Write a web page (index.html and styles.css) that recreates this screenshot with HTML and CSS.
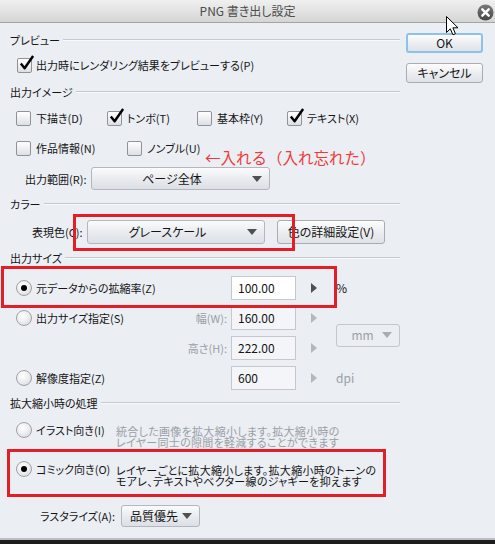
FILE: index.html
```html
<!DOCTYPE html>
<html lang="ja">
<head>
<meta charset="utf-8">
<link rel="stylesheet" href="styles.css">
</head>
<body>
<div class="dialog">
  <div class="titlebar">
    <span class="title">PNG 書き出し設定</span>
    <svg class="close" width="17" height="17" viewBox="0 0 17 17">
      <defs><linearGradient id="cg" x1="0" y1="0" x2="0" y2="1"><stop offset="0" stop-color="#7a7a7a"/><stop offset="1" stop-color="#474747"/></linearGradient></defs>
      <circle cx="8.5" cy="8.5" r="8" fill="url(#cg)"/>
      <path d="M5.3 5.3 L11.7 11.7 M11.7 5.3 L5.3 11.7" stroke="#fff" stroke-width="2.4" stroke-linecap="round"/>
    </svg>
  </div>
  <div class="body">
    <div class="main">
      <div class="sec s1">プレビュー</div>
      <div class="row r-preview">
        <span class="cb on"><svg viewBox="0 0 18 18"><path d="M3 9 L7 14 L16 1" fill="none" stroke="#000" stroke-width="2.6" stroke-linejoin="round"/></svg></span>
        <span>出力時にレンダリング結果をプレビューする(P)</span>
      </div>

      <div class="sec s2">出力イメージ</div>
      <div class="row r-img1">
        <span class="item"><span class="cb"></span>下描き(D)</span>
        <span class="item"><span class="cb on"><svg viewBox="0 0 18 18"><path d="M3 9 L7 14 L16 1" fill="none" stroke="#000" stroke-width="2.6" stroke-linejoin="round"/></svg></span>トンボ(T)</span>
        <span class="item"><span class="cb"></span>基本枠(Y)</span>
        <span class="item"><span class="cb on"><svg viewBox="0 0 18 18"><path d="M3 9 L7 14 L16 1" fill="none" stroke="#000" stroke-width="2.6" stroke-linejoin="round"/></svg></span>テキスト(X)</span>
      </div>
      <div class="row r-img2">
        <span class="item"><span class="cb"></span>作品情報(N)</span>
        <span class="item"><span class="cb"></span>ノンブル(U)</span>
      </div>
      <div class="row r-range">
        <span class="lbl lbl-range">出力範囲(R):</span>
        <span class="dd dd-range"><span class="dd-text">ページ全体</span><span class="arrow"></span></span>
      </div>

      <div class="sec s3">カラー</div>
      <div class="row r-color">
        <span class="lbl lbl-color">表現色(C):</span>
        <span class="dd dd-color"><span class="dd-text">グレースケール</span><span class="arrow"></span></span>
        <span class="btn btn-detail">色の詳細設定(V)</span>
      </div>

      <div class="sec s4">出力サイズ</div>
      <div class="size-grid">
        <span class="opt"><span class="rb on"></span>元データからの拡縮率(Z)</span>
        <span class="field">100.00</span>
        <span class="spin"></span>
        <span class="unit">%</span>

        <span class="opt"><span class="rb"></span>出力サイズ指定(S)<span class="sub">幅(W):</span></span>
        <span class="field off">160.00</span>
        <span class="spin off"></span>
        <span class="dd dd-mm"><span class="dd-text">mm</span><span class="arrow off"></span></span>

        <span class="opt"><span class="sub">高さ(H):</span></span>
        <span class="field off">222.00</span>
        <span class="spin off"></span>

        <span class="opt"><span class="rb"></span>解像度指定(Z)</span>
        <span class="field off">600</span>
        <span class="spin off"></span>
        <span class="unit gray">dpi</span>
      </div>

      <div class="sec s5">拡大縮小時の処理</div>
      <div class="scale r-illust">
        <span class="opt"><span class="rb"></span>イラスト向き(I)</span>
        <span class="desc gray">統合した画像を拡大縮小します。拡大縮小時の<br>レイヤー同士の隙間を軽減することができます</span>
      </div>
      <div class="scale r-comic">
        <span class="opt"><span class="rb on"></span>コミック向き(O)</span>
        <span class="desc">レイヤーごとに拡大縮小します。拡大縮小時のトーンの<br>モアレ、テキストやベクター線のジャギーを抑えます</span>
      </div>
      <div class="row r-raster">
        <span class="lbl lbl-raster">ラスタライズ(A):</span>
        <span class="dd dd-raster"><span class="dd-text">品質優先</span><span class="arrow"></span></span>
      </div>
    </div>
    <div class="side">
      <span class="btn btn-ok">OK</span>
      <span class="btn btn-cancel">キャンセル</span>
    </div>
  </div>

  <div class="note">←入れる（入れ忘れた）</div>
  <div class="mark mark-color"></div>
  <div class="mark mark-size"></div>
  <div class="mark mark-comic"></div>

  <svg class="cursor" width="13" height="20" viewBox="0 0 13 20">
    <path d="M0.5 0.5 V16.5 L4.3 12.8 L6.9 18.8 L9.4 17.7 L6.9 11.8 H12 Z" fill="#fff" stroke="#000" stroke-width="1" stroke-linejoin="round"/>
  </svg>
</div>
<div class="taskbar"></div>
</body>
</html>
```
FILE: styles.css
```css
* { box-sizing: border-box; }
html, body { margin: 0; padding: 0; }
body {
  width: 495px;
  height: 544px;
  overflow: hidden;
  background: #1c1c1c;
  font-family: "Noto Sans CJK JP", "Noto Sans", sans-serif;
  font-size: 11px;
  color: #151515;
  font-feature-settings: "palt" 1;
}
.dialog {
  position: relative;
  height: 540px;
  background: #ebeef3;
  border-bottom: 2px solid #b9bdc3;
}
.titlebar {
  position: relative;
  height: 23px;
  background: linear-gradient(#f0f0f0, #d5d5d5);
  border-bottom: 1px solid #a3a3a3;
  display: flex;
  align-items: center;
  justify-content: center;
}
.title { font-size: 12px; line-height: 22px; color: #4c4c4c; }
.close { position: absolute; right: 1px; top: 4px; }
.cursor { position: absolute; left: 446px; top: 16px; }

.body { display: flex; }
.main { width: 400px; }
.side {
  padding-top: 10px;
  margin-left: 6px;
  display: flex;
  flex-direction: column;
  gap: 10px;
}

.sec {
  display: flex;
  align-items: center;
  height: 16px;
  line-height: 16px;
  padding-left: 10px;
  white-space: nowrap;
}
.sec::after {
  content: "";
  flex: 1;
  margin-left: 3px;
  border-top: 1px solid #c6cad0;
  border-bottom: 1px solid #f8f9fb;
}
.s1 { margin-top: 9px; }
.s2 { margin-top: 10px; }
.s3 { margin-top: 6px; }
.s4 { margin-top: 6px; }
.s5 { margin-top: 5px; }

.row { display: flex; align-items: center; white-space: nowrap; line-height: 16px; }
.r-preview { margin-top: 8px; height: 18px; padding-left: 17px; gap: 4px; }
.r-img1 { margin-top: 9px; height: 18px; padding-left: 16px; display: grid; grid-template-columns: 91px 90px 90px auto; }
.r-img2 { margin-top: 12px; height: 18px; padding-left: 16px; display: grid; grid-template-columns: 111px auto; }
.item { display: flex; align-items: center; gap: 5px; }
.r-range { margin-top: 10px; height: 23px; padding-left: 25px; }
.r-color { margin-top: 8px; height: 24px; padding-left: 32px; }
.r-raster { margin-top: 18px; height: 22px; padding-left: 40px; }

.lbl-range { width: 66px; }
.lbl-color { width: 55px; }
.lbl-raster { width: 81px; }

.cb {
  position: relative;
  width: 15px;
  height: 15px;
  flex: none;
  border: 1px solid #8f9399;
  border-radius: 2px;
  background: linear-gradient(#ffffff, #dcdfe4);
}
.cb svg { position: absolute; left: 0; top: -4px; width: 17px; height: 17px; }

.rb {
  width: 16px;
  height: 16px;
  flex: none;
  border: 1px solid #9ea2a8;
  border-radius: 50%;
  background: radial-gradient(circle at 40% 35%, #ffffff 0%, #e9ebee 55%, #cfd2d7 100%);
  display: flex;
  align-items: center;
  justify-content: center;
}
.rb.on::after {
  content: "";
  width: 6px;
  height: 6px;
  border-radius: 50%;
  background: #000;
}

.dd {
  display: flex;
  align-items: center;
  border: 1px solid #b3b7bd;
  border-radius: 3px;
  background: linear-gradient(#fbfbfc, #e6e9ed 60%, #dcdfe4);
  font-size: 12px;
  line-height: 16px;
}
.dd-text { flex: 1; text-align: center; }
.arrow {
  width: 0;
  height: 0;
  margin-right: 7px;
  border-left: 5px solid transparent;
  border-right: 5px solid transparent;
  border-top: 6px solid #505050;
}
.arrow.off { border-top-color: #a9adb3; }
.dd-range { width: 179px; height: 23px; }
.dd-color { width: 178px; height: 24px; }
.dd-raster { width: 79px; height: 22px; }
.dd-raster .dd-text { text-align: left; padding-left: 8px; }
.dd-mm {
  grid-column: 4;
  grid-row: 2 / span 2;
  align-self: center;
  height: 23px;
  margin-top: 4px;
  border-color: #c3c7cd;
  background: #ebeef3;
  color: #9a9fa6;
}
.dd-mm .dd-text { padding-left: 6px; }

.btn {
  display: flex;
  align-items: center;
  justify-content: center;
  border: 1px solid #a9adb3;
  border-radius: 3px;
  background: linear-gradient(#fdfdfd, #e9ebef 60%, #dfe2e6);
  font-size: 12px;
  line-height: 16px;
  white-space: nowrap;
}
.btn-ok { width: 77px; height: 20px; border: 2px solid #8dc3ea; }
.btn-cancel { width: 77px; height: 20px; }
.btn-detail { width: 108px; height: 24px; margin-left: 12px; }

.size-grid {
  margin-top: 10px;
  margin-left: 16px;
  display: grid;
  grid-template-columns: 215px 65px 40px 64px;
  grid-template-rows: repeat(4, 24px);
  row-gap: 6px;
  white-space: nowrap;
  line-height: 16px;
}
.opt { display: flex; align-items: center; gap: 4px; }
.sub { margin-left: auto; padding-right: 4px; color: #9a9fa6; }
.field {
  display: flex;
  align-items: center;
  padding-left: 6px;
  border: 1px solid #c5c9cf;
  background: #fff;
  font-size: 12px;
}
.field.off { background: #f3f5f9; }
.spin {
  align-self: center;
  justify-self: start;
  margin-left: 15px;
  width: 0;
  height: 0;
  border-top: 5px solid transparent;
  border-bottom: 5px solid transparent;
  border-left: 6px solid #4f4f4f;
}
.spin.off { border-left-color: #b3b7bd; }
.unit { display: flex; align-items: center; font-size: 12px; }
.gray { color: #9a9fa6; }

.scale {
  margin-left: 16px;
  display: grid;
  grid-template-columns: 100px auto;
  height: 26px;
  white-space: nowrap;
}
.scale .opt { align-self: start; line-height: 16px; }
.desc { margin-top: 4px; line-height: 11px; letter-spacing: 0.3px; }
.r-illust { margin-top: 11px; }
.r-comic { margin-top: 13px; }

.note {
  position: absolute;
  left: 205px;
  top: 148px;
  font-size: 15.5px;
  line-height: 18px;
  color: #f03a3a;
  white-space: nowrap;
  font-feature-settings: normal;
}
.mark { position: absolute; border: 3px solid #e41e26; }
.mark-color { left: 73px; top: 214px; width: 222px; height: 37px; }
.mark-size { left: 1px; top: 266px; width: 336px; height: 42px; }
.mark-comic { left: 7px; top: 449px; width: 379px; height: 48px; }

.taskbar { height: 4px; background: #1c1c1c; }
```
